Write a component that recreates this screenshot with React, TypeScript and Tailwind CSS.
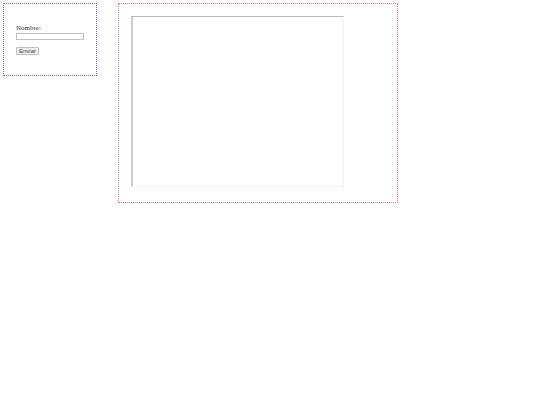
export default function App() {
  return (
    <div className="flex items-start gap-[21px] p-[3px] bg-white min-h-[405px]">
      <form
        className="w-[94px] h-[73px] border border-dotted border-[#6a6ac8] pl-[12px] pt-[20px] shrink-0"
        style={{ fontFamily: '"Liberation Serif", serif' }}
        onSubmit={(e) => e.preventDefault()}
      >
        <label className="block text-[7px] leading-[9px] text-[#333]">Nombre:</label>
        <input
          type="text"
          className="block w-[68px] h-[7px] border border-[#c0c0c0] bg-white outline-none"
        />
        <button
          type="submit"
          className="flex items-center justify-center mt-[7px] w-[23px] h-[8px] border border-[#c0c0c0] bg-[#f0f0f0] text-[6px] leading-[6px] text-[#444] rounded-[1px]"
          style={{ fontFamily: '"Liberation Sans", sans-serif' }}
        >
          Enviar
        </button>
      </form>
      <div className="w-[280px] h-[200px] border border-dotted border-[#e07878] p-[12px] shrink-0">
        <div className="w-[213px] h-[171px] bg-white border-t-[1px] border-l-[2px] border-t-[#b8b8b8] border-l-[#cccccc] border-b-[1px] border-r-[1px] border-b-[#f2f2f2] border-r-[#f2f2f2]" />
      </div>
    </div>
  );
}
